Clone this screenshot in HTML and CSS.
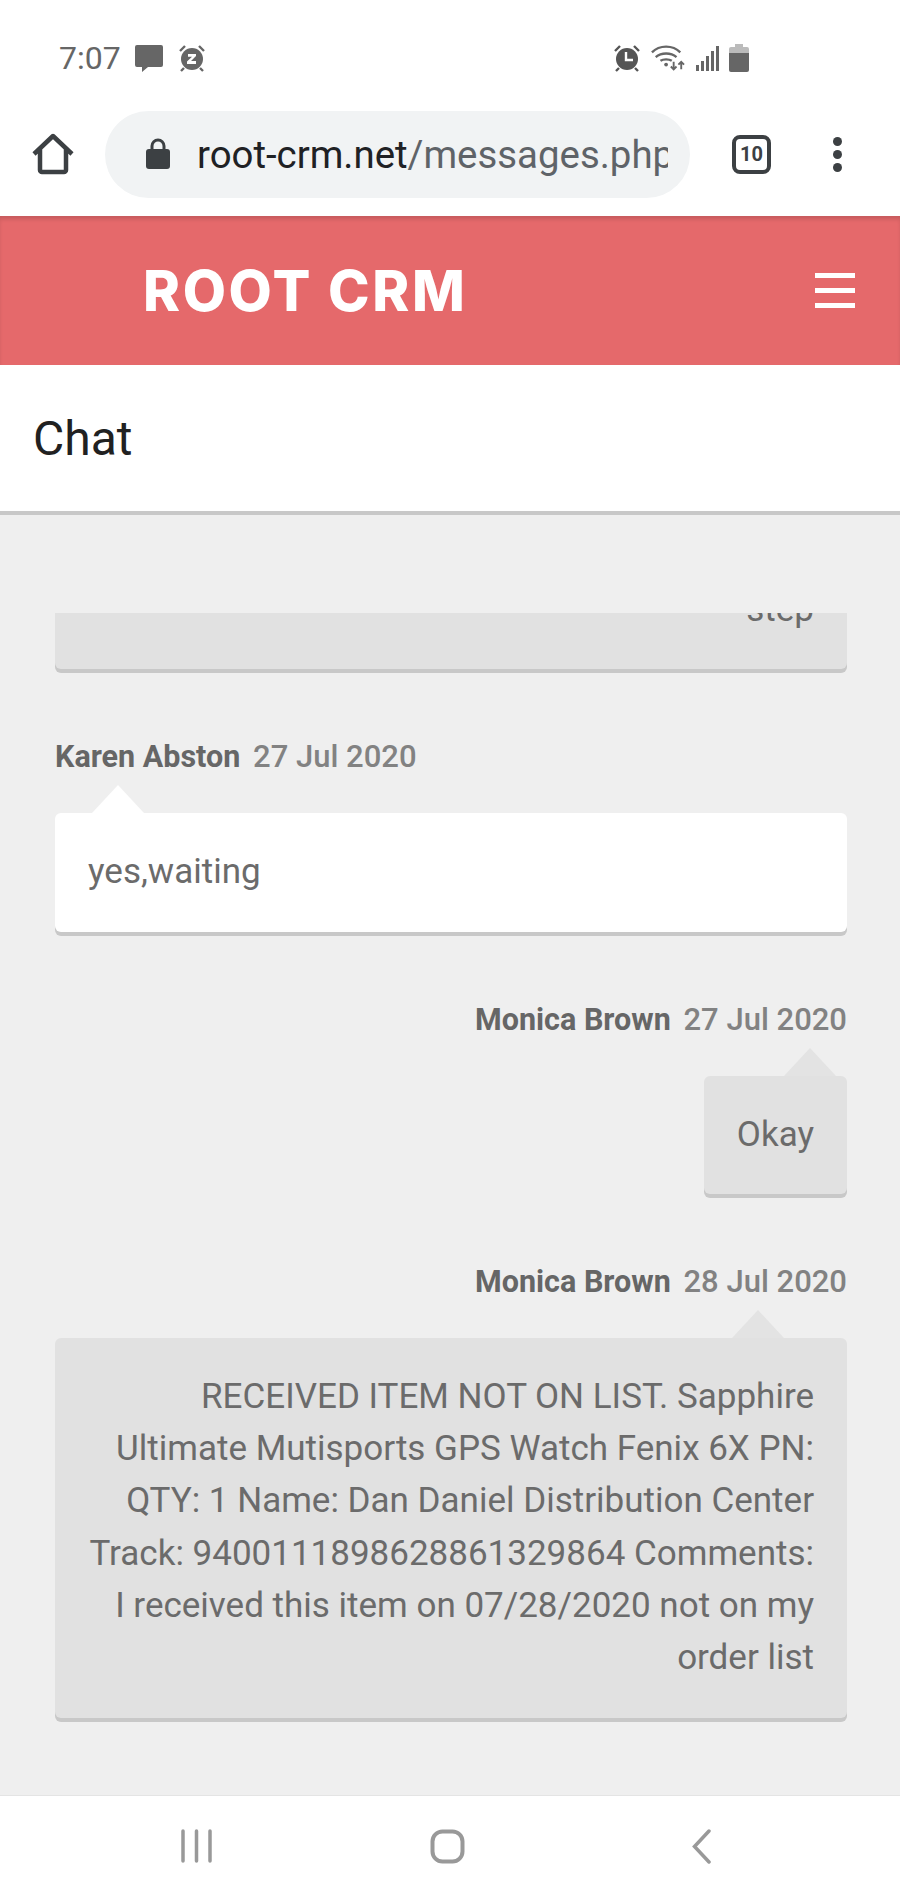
FILE: index.html
```html
<!DOCTYPE html>
<html lang="en">
<head>
    <meta charset="UTF-8">
    <meta name="viewport" content="width=device-width, initial-scale=1.0">
    <title>Chat - ROOT CRM</title>
    <link rel="stylesheet" href="styles.css">
</head>
<body>
    <div class="status-bar">
        <div class="status-left">
            <span class="clock">7:07</span>
            <svg class="msg-icon" width="30" height="28" viewBox="0 0 30 28"><path d="M3 1h24a2 2 0 0 1 2 2v18a2 2 0 0 1-2 2H14l-6 5v-5H3a2 2 0 0 1-2-2V3a2 2 0 0 1 2-2z" fill="#666"/></svg>
            <svg class="snooze-icon" width="28" height="28" viewBox="0 0 28 28"><path d="M2 7l5-5M26 7l-5-5M6 24l-3 3M22 24l3 3" stroke="#666" stroke-width="2.4" fill="none"/><circle cx="14" cy="15" r="11" fill="#666"/><path d="M10 10h8v2l-5 5h5v3h-9v-2.400l5-4.800h-4z" fill="#fff"/></svg>
        </div>
        <div class="status-right">
            <svg width="28" height="28" viewBox="0 0 28 28"><path d="M2 7l5-5M26 7l-5-5M6 24l-3 3M22 24l3 3" stroke="#555" stroke-width="2.400" fill="none"/><circle cx="14" cy="15" r="11" fill="#555"/><path d="M13 8v8h7" stroke="#fff" stroke-width="2.400" fill="none"/></svg>
            <svg width="34" height="28" viewBox="0 0 36 28"><path d="M1 8c8-8 22-8 30 0M5 13c6-5 16-5 22 0M10 17c3-2 9-2 12 0" stroke="#666" stroke-width="2.500" fill="none"/><circle cx="16" cy="21" r="2" fill="#666"/><path d="M24 18v8M21 23l3 3 3-3M32 26v-8M29 21l3-3 3 3" stroke="#666" stroke-width="2" fill="none"/></svg>
            <svg width="24" height="28" viewBox="0 0 24 28"><path d="M1 21h3v6H1zM6 17h3v10H6zM11 12h3v15h-3zM16 7h3v20h-3zM21 2h3v25h-3z" fill="#666"/></svg>
            <svg width="20" height="28" viewBox="0 0 20 28"><path d="M6 0h8v3h4a2 2 0 0 1 2 2v4H0V5a2 2 0 0 1 2-2h4z" fill="#bbb"/><path d="M0 9h20v17a2 2 0 0 1-2 2H2a2 2 0 0 1-2-2z" fill="#666"/></svg>
        </div>
    </div>

    <div class="toolbar">
        <svg class="home-icon" width="42" height="42" viewBox="0 0 42 42"><path d="M2 21L21 3l19 18M8 16v21a2 2 0 0 0 2 2h22a2 2 0 0 0 2-2V16" stroke="#3c4043" stroke-width="4.500" fill="none" stroke-linejoin="round"/></svg>
        <div class="url-box">
            <svg class="lock" width="24" height="32" viewBox="0 0 24 32"><path d="M6 12V8a6 6 0 0 1 12 0v4" stroke="#3c4043" stroke-width="3" fill="none"/><rect y="11" width="24" height="20" rx="3" fill="#3c4043"/></svg>
            <div class="url"><span class="url-host">root-crm.net</span>/messages.php</div>
        </div>
        <div class="tabs">10</div>
        <div class="dots"><i></i><i></i><i></i></div>
    </div>

    <header class="top-header">
        <div class="logo">ROOT CRM</div>
        <div class="burger"><i></i><i></i><i></i></div>
    </header>

    <div class="page-title">Chat</div>

    <main class="chat-area">
        <div class="chat-scroll">
            <div class="chat-list">
                <div class="message mine">
                    <div class="bubble wide">step</div>
                </div>
                <div class="message theirs">
                    <div class="meta"><b>Karen Abston</b> <span>27 Jul 2020</span></div>
                    <div class="bubble wide">yes,waiting</div>
                </div>
                <div class="message mine">
                    <div class="meta"><b>Monica Brown</b> <span>27 Jul 2020</span></div>
                    <div class="bubble">Okay</div>
                </div>
                <div class="message mine long">
                    <div class="meta"><b>Monica Brown</b> <span>28 Jul 2020</span></div>
                    <div class="bubble wide">RECEIVED ITEM NOT ON LIST. Sapphire Ultimate Mutisports GPS Watch Fenix 6X PN: QTY: 1 Name: Dan Daniel Distribution Center Track: 9400111898628861329864 Comments: I received this item on 07/28/2020 not on my order list</div>
                </div>
                <div class="message theirs">
                    <div class="meta"><b>Karen Abston</b> <span>28 Jul 2020</span></div>
                </div>
            </div>
        </div>
    </main>

    <nav class="nav-bar">
        <svg width="31" height="34" viewBox="0 0 31 34"><path d="M2 2v30M15.500 2v30M29 2v30" stroke="#999" stroke-width="3.500" stroke-linecap="round"/></svg>
        <svg class="nav-home" width="35" height="35" viewBox="0 0 35 35"><rect x="2.500" y="2.500" width="30" height="30" rx="10" stroke="#999" stroke-width="4" fill="none"/></svg>
        <svg width="19" height="35" viewBox="0 0 19 35"><path d="M17 2L2.500 17.500 17 33" stroke="#999" stroke-width="3.500" fill="none" stroke-linecap="round"/></svg>
    </nav>
</body>
</html>
```

FILE: styles.css
```css
* {
    box-sizing: border-box;
}
html, body {
    margin: 0;
    padding: 0;
}
body {
    width: 900px;
    height: 1900px;
    font-family: 'Roboto', 'Liberation Sans', sans-serif;
    background-color: #fff;
    display: flex;
    flex-direction: column;
    overflow: hidden;
}
.status-bar {
    height: 108px;
    padding: 40px 151px 0 59px;
    display: flex;
    justify-content: space-between;
    align-items: flex-start;
}
.status-left, .status-right {
    display: flex;
    align-items: center;
    height: 36px;
}
.msg-icon {
    margin-left: 13px;
}
.snooze-icon {
    margin-left: 14px;
}
.status-right {
    gap: 10px;
}
.clock {
    font-size: 32px;
    color: #666;
}
.toolbar {
    height: 108px;
    display: flex;
    align-items: center;
    padding: 0 0 16px 32px;
}
.home-icon {
    flex: none;
}
.url-box {
    width: 585px;
    height: 87px;
    margin-left: 31px;
    background-color: #f1f3f4;
    border-radius: 44px;
    display: flex;
    align-items: center;
    padding-left: 41px;
}
.url {
    margin-left: 27px;
    width: 471px;
    font-size: 38.400px;
    color: #5f6368;
    overflow: hidden;
    white-space: nowrap;
}
.url-host {
    color: #202124;
}
.tabs {
    width: 39px;
    height: 39px;
    margin-left: 42px;
    border: 4px solid #3c4043;
    border-radius: 8px;
    font-size: 20px;
    font-weight: 700;
    color: #3c4043;
    display: flex;
    align-items: center;
    justify-content: center;
}
.dots {
    margin-left: 62px;
    display: flex;
    flex-direction: column;
    gap: 4px;
}
.dots i {
    width: 9px;
    height: 9px;
    border-radius: 50%;
    background-color: #3c4043;
}
.top-header {
    height: 149px;
    background-color: #e5696b;
    box-shadow: inset 0 4px 4px -1px rgba(0, 0, 0, 0.14);
    display: flex;
    align-items: center;
    justify-content: space-between;
    padding: 0 45px 0 143px;
}
.logo {
    font-family: 'Inter', sans-serif;
    font-weight: 800;
    font-size: 56px;
    letter-spacing: 2.600px;
    color: #fff;
}
.burger {
    display: flex;
    flex-direction: column;
    gap: 10px;
}
.burger i {
    display: block;
    width: 40px;
    height: 5px;
    background-color: #fff;
}
.page-title {
    height: 150px;
    padding: 0 33px;
    display: flex;
    align-items: center;
    font-size: 48px;
    color: #212121;
    border-bottom: 4px solid #c8c8c8;
}
.chat-area {
    height: 1281px;
    background-color: #efefef;
    padding-top: 98px;
    border-bottom: 1px solid #e4e4e4;
}
.chat-scroll {
    height: 1182px;
    overflow: hidden;
}
.chat-list {
    margin-top: -62px;
    padding: 0 53px 0 55px;
}
.message {
    display: flex;
    flex-direction: column;
    margin-bottom: 68px;
}
.message.long {
    margin-bottom: 71px;
}
.message.mine {
    align-items: flex-end;
}
.message.theirs {
    align-items: flex-start;
}
.meta {
    height: 40px;
    margin-bottom: 36px;
    font-size: 31px;
    line-height: 40px;
    color: #828282;
    font-weight: 500;
}
.meta b {
    color: #666;
    font-size: 30.500px;
    font-weight: 700;
    margin-right: 5px;
}
.bubble {
    position: relative;
    padding: 33px;
    font-size: 35px;
    line-height: 52.300px;
    color: #6b6b6b;
    background-color: #e1e1e1;
    border-radius: 6px;
    box-shadow: 0 4px 0 #c8c8c8;
}
.bubble.wide {
    width: 792px;
}
.mine .bubble {
    text-align: right;
}
.theirs .bubble {
    background-color: #fff;
}
.bubble::before {
    content: "";
    position: absolute;
    top: -28px;
    border-left: 26px solid transparent;
    border-right: 26px solid transparent;
    border-bottom: 28px solid #e3e3e3;
}
.mine .bubble::before {
    right: 8%;
}
.theirs .bubble::before {
    left: 37px;
    border-bottom-color: #fff;
}
.nav-bar {
    height: 103px;
    display: flex;
    align-items: center;
    background-color: #fff;
    padding: 0 0 3px 181px;
}
.nav-home {
    margin: 0 227px 0 218px;
}
```
